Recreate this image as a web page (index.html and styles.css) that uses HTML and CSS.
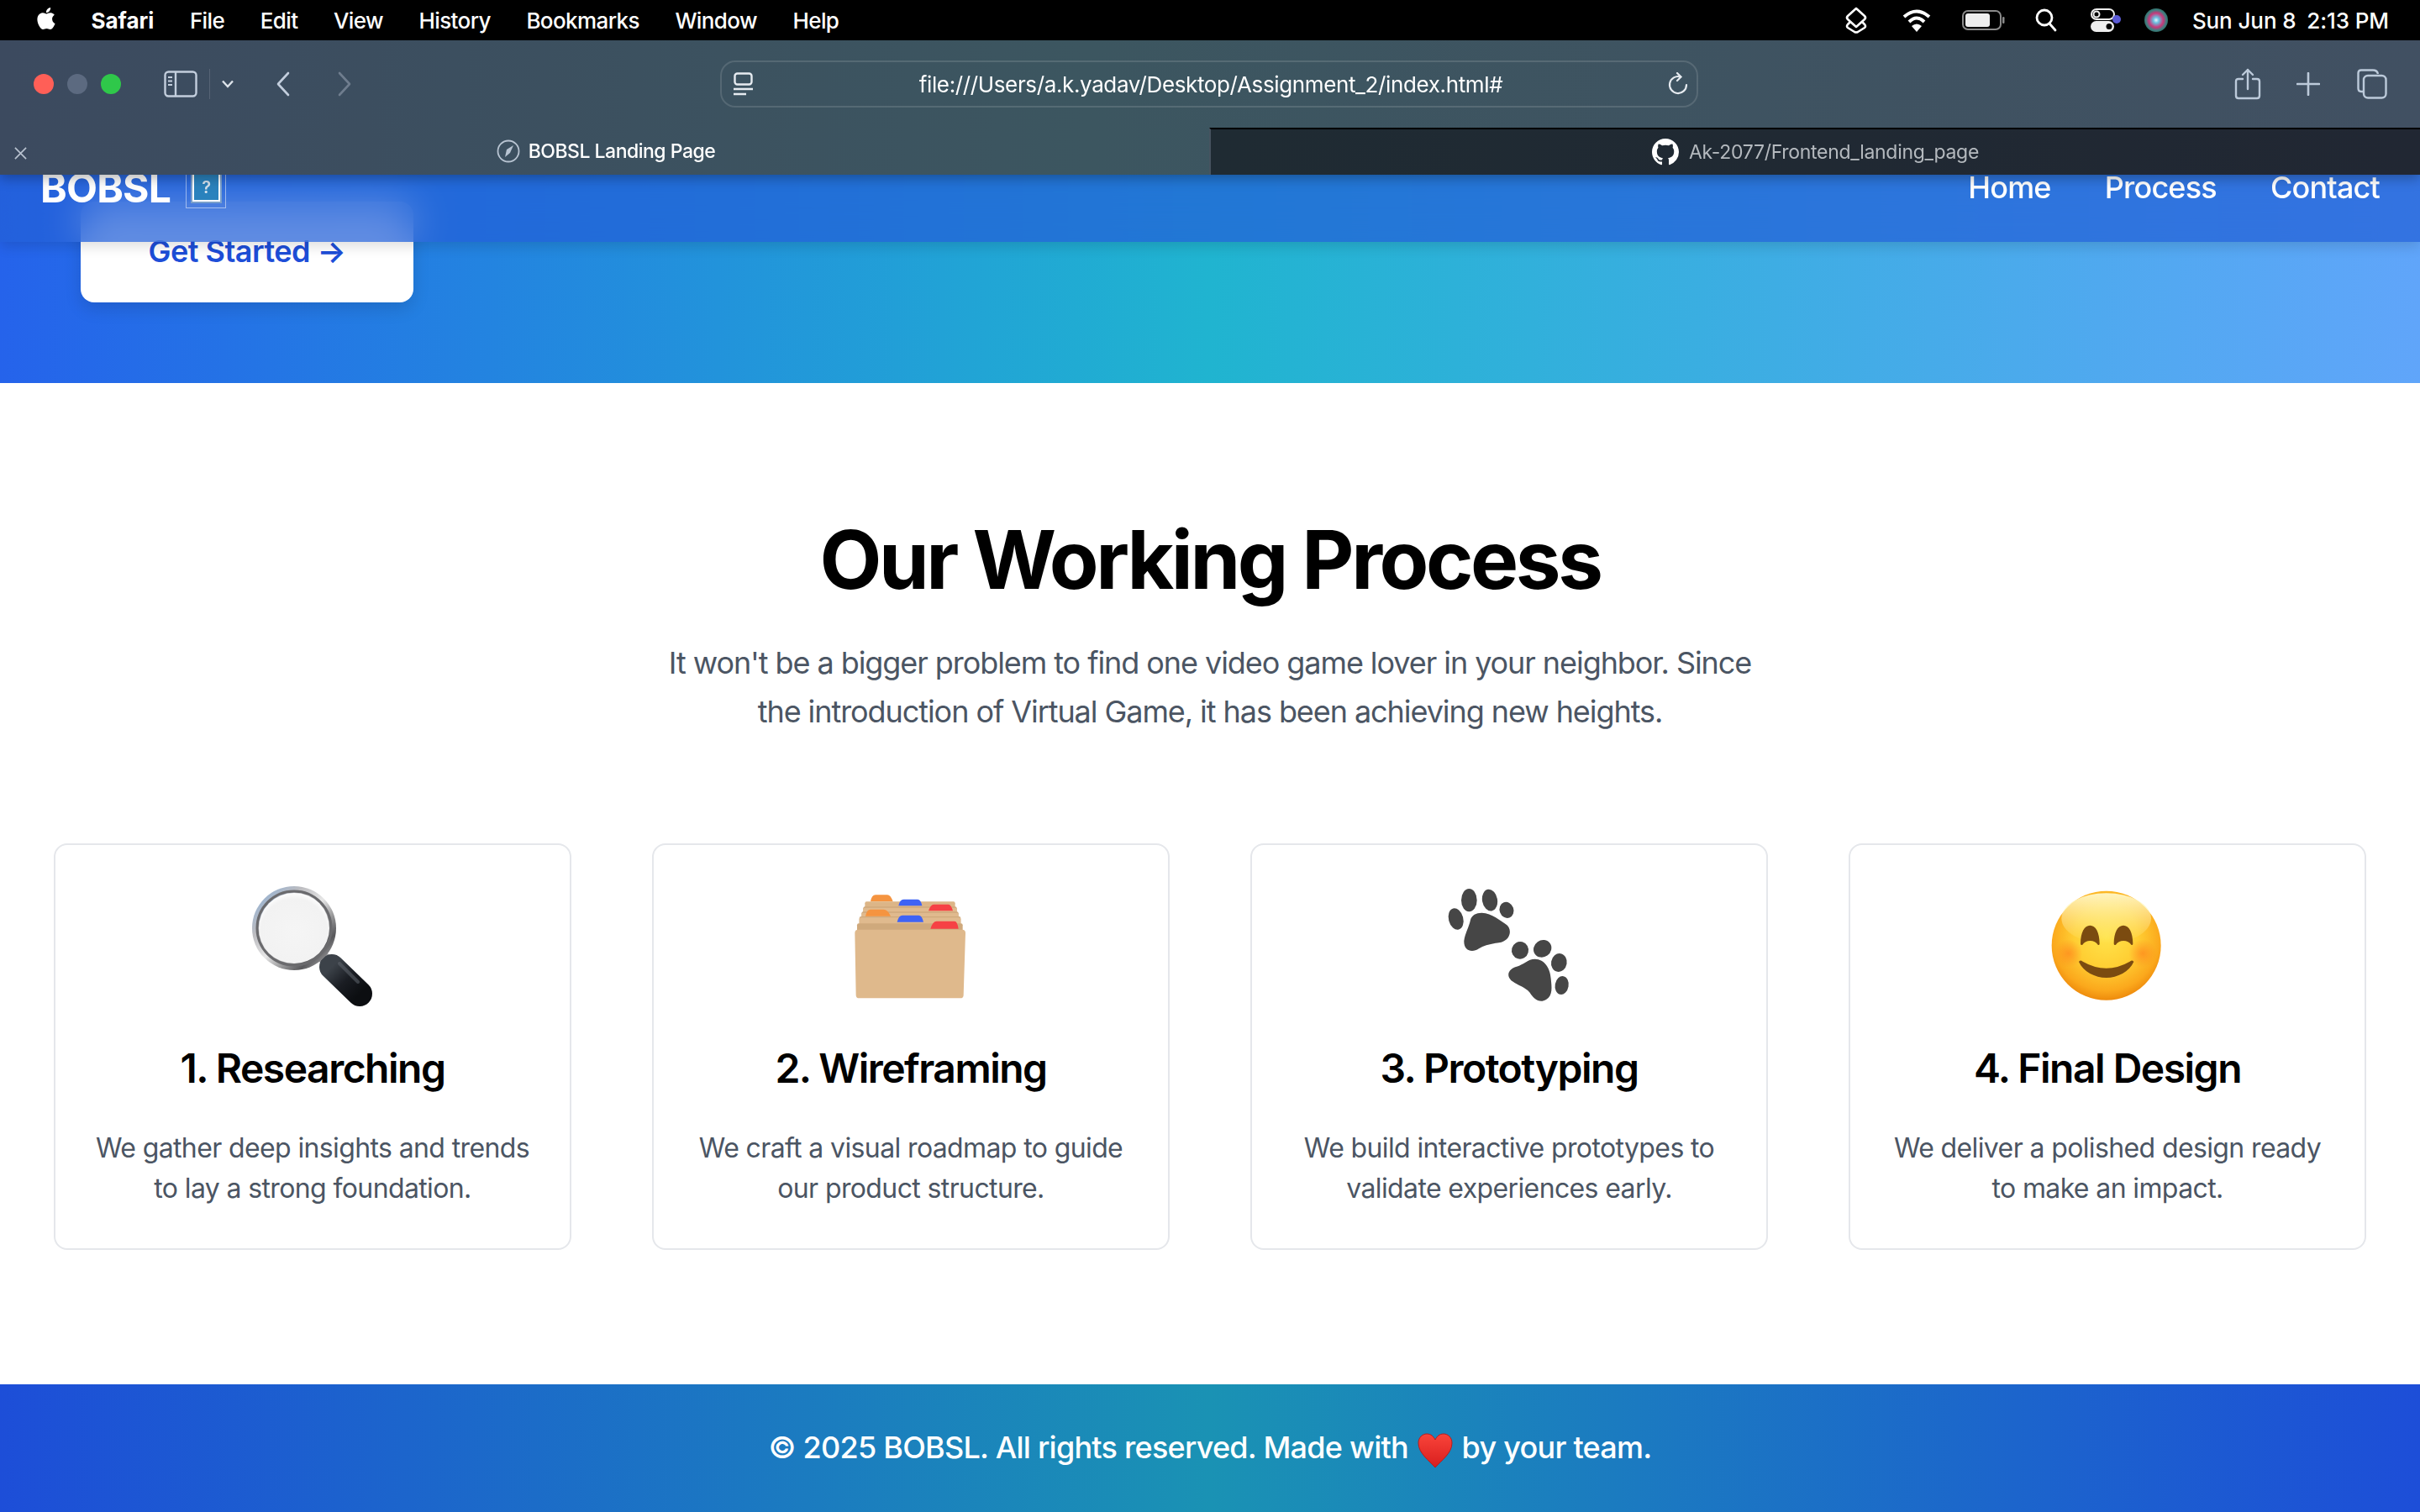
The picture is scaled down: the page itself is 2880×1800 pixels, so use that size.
FILE: index.html
```html
<!DOCTYPE html>
<html lang="en">
<head>
<meta charset="utf-8">
<title>BOBSL Landing Page</title>
<link rel="stylesheet" href="styles.css">
</head>
<body>
<div class="menubar">
  <div class="menu-left">
    <svg class="apple" viewBox="0 0 24 24"><path fill="#fff" d="M12.152 6.896c-.948 0-2.415-1.078-3.96-1.04-2.04.027-3.91 1.183-4.961 3.014-2.117 3.675-.546 9.103 1.519 12.09 1.013 1.454 2.208 3.09 3.792 3.039 1.52-.065 2.09-.987 3.935-.987 1.831 0 2.35.987 3.96.948 1.637-.026 2.676-1.48 3.676-2.948 1.156-1.688 1.636-3.325 1.662-3.415-.039-.013-3.182-1.221-3.22-4.857-.026-3.04 2.48-4.494 2.597-4.559-1.429-2.09-3.623-2.324-4.39-2.376-2-.156-3.675 1.09-4.61 1.09zM15.53 3.83c.843-1.012 1.4-2.427 1.245-3.83-1.207.052-2.662.805-3.532 1.818-.78.896-1.454 2.338-1.273 3.714 1.338.104 2.715-.688 3.559-1.701"/></svg>
    <b class="menu-app">Safari</b><span>File</span><span>Edit</span><span>View</span><span>History</span><span>Bookmarks</span><span>Window</span><span>Help</span>
  </div>
  <div class="menu-right">
    <svg class="st-layers" viewBox="0 0 28 32" fill="none" stroke="#fff" stroke-width="2.6" stroke-linejoin="round"><path d="M14 2 L24 11 Q26 13 24 15 L14 24 L4 15 Q2 13 4 11Z"/><path d="M7 18 L4 21 Q2 23.500 4 25 L12 30 Q14 31 16 30 L24 25 Q26 23.500 24 21 L21 18"/></svg>
    <svg class="st-wifi" viewBox="0 0 34 30" fill="none" stroke="#fff" stroke-width="4"><path d="M2 11 Q17 -2 32 11"/><path d="M8 17 Q17 8 26 17"/><path fill="#fff" stroke="none" d="M17 29 L11 22 Q17 17 23 22Z"/></svg>
    <svg class="st-batt" viewBox="0 0 52 24"><rect x="1" y="1" width="45" height="22" rx="6" fill="none" stroke="#8a8a8a" stroke-width="2"/><rect x="4" y="4" width="29" height="16" rx="3" fill="#eee"/><rect x="48" y="8" width="2.500" height="8" rx="1.200" fill="#8a8a8a"/></svg>
    <svg class="st-search" viewBox="0 0 26 28" fill="none" stroke="#fff" stroke-width="2.800" stroke-linecap="round"><circle cx="11" cy="11" r="9"/><path d="M17 18 L24 26"/></svg>
    <svg class="st-ctrl" viewBox="0 0 36 28"><rect x="1" y="1" width="27" height="12" rx="6" fill="none" stroke="#eee" stroke-width="2"/><circle cx="7" cy="7" r="3.500" fill="none" stroke="#eee" stroke-width="2"/><rect x="0" y="15" width="28" height="13" rx="6.500" fill="#eee"/><circle cx="22" cy="21.500" r="3.500" fill="#000"/><circle cx="31" cy="13" r="5" fill="#5b5bd6"/></svg>
    <svg class="st-siri" viewBox="0 0 28 28"><defs><radialGradient id="siri" cx=".5" cy=".5" r=".55"><stop offset="0" stop-color="#e8f4ff"/><stop offset=".22" stop-color="#6ac0e0"/><stop offset=".55" stop-color="#c8387a"/><stop offset=".8" stop-color="#3a8080"/><stop offset="1" stop-color="#2f5c50"/></radialGradient></defs><circle cx="14" cy="14" r="14" fill="url(#siri)"/></svg>
    <span class="clock">Sun Jun 8 <i class="clock-gap"></i>2:13 PM</span>
  </div>
</div>

<header class="chrome">
  <div class="toolbar">
    <div class="lights"><i class="light red"></i><i class="light grey"></i><i class="light green"></i></div>
    <svg class="ic-side" viewBox="0 0 40 32" fill="none" stroke="#c3cedd" stroke-width="2.400"><rect x="1.500" y="1.500" width="37" height="29" rx="4"/><path d="M14 2 V30"/><path d="M5 8 H10 M5 12.500 H10 M5 17 H10" stroke-width="2"/></svg>
    <i class="tb-sep"></i>
    <svg class="ic-chev" viewBox="0 0 16 10" fill="none" stroke="#dde3ea" stroke-width="2.400"><path d="M2 1.500 L8 8 L14 1.500"/></svg>
    <svg class="ic-back" viewBox="0 0 18 30" fill="none" stroke="#c3cedd" stroke-width="2.600" stroke-linecap="round" stroke-linejoin="round"><path d="M15 2 L3 15 L15 28"/></svg>
    <svg class="ic-fwd" viewBox="0 0 18 30" fill="none" stroke="#6f7d8e" stroke-width="2.600" stroke-linecap="round" stroke-linejoin="round"><path d="M3 2 L15 15 L3 28"/></svg>
    <div class="addr">
      <svg class="ic-page" viewBox="0 0 24 28" fill="none" stroke="#e6ebf0" stroke-width="2.400"><rect x="1.500" y="1.500" width="20" height="13" rx="3"/><path d="M0 20 H23 M0 26 H15"/></svg>
      <span class="url">file:///Users/a.k.yadav/Desktop/Assignment_2/index.html#</span>
      <svg class="ic-reload" viewBox="0 0 24 28" fill="none" stroke="#e6ebf0" stroke-width="2.200" stroke-linecap="round"><path d="M15 5.500 A10 10 0 1 0 22 15"/><path d="M11 1 L15.500 5.500 L11 10"/></svg>
    </div>
    <div class="tb-right">
      <svg class="ic-share" viewBox="0 0 32 38" fill="none" stroke="#bccada" stroke-width="2.400" stroke-linecap="round" stroke-linejoin="round"><path d="M10 13 H5 Q2 13 2 16 V33 Q2 36 5 36 H27 Q30 36 30 33 V16 Q30 13 27 13 H22"/><path d="M16 25 V2 M10 8 L16 2 L22 8"/></svg>
      <svg class="ic-plus" viewBox="0 0 28 28" fill="none" stroke="#bccada" stroke-width="2.600" stroke-linecap="round"><path d="M14 1 V27 M1 14 H27"/></svg>
      <svg class="ic-tabs" viewBox="0 0 36 36" fill="none" stroke="#bccada" stroke-width="2.400"><path d="M7 27 H5 Q1.500 27 1.500 23 V5 Q1.500 1.500 5 1.500 H19 Q24 1.500 25 6"/><rect x="8" y="8" width="26.500" height="26.500" rx="5"/></svg>
    </div>
  </div>
  <div class="tabs">
    <div class="tab tab-active">
      <svg class="tab-close" viewBox="0 0 16 16" fill="none" stroke="#b8c2cf" stroke-width="1.800"><path d="M1 1 L15 15 M15 1 L1 15"/></svg>
      <svg class="ic-compass" viewBox="0 0 28 28" fill="none" stroke="#b8c4d2" stroke-width="1.800"><circle cx="14" cy="14" r="12.500"/><path fill="#b8c4d2" stroke="none" d="M20 7 L16 16 L10 21 L12 12Z"/></svg>
      <span>BOBSL Landing Page</span>
    </div>
    <div class="tab tab-idle">
      <svg class="ic-gh" viewBox="0 0 16 16"><path fill="#fff" d="M8 0C3.58 0 0 3.58 0 8c0 3.54 2.29 6.53 5.47 7.59.4.07.55-.17.55-.38 0-.19-.01-.82-.01-1.49-2.01.37-2.53-.49-2.69-.94-.09-.23-.48-.94-.82-1.13-.28-.15-.68-.52-.01-.53.63-.01 1.08.58 1.23.82.72 1.21 1.87.87 2.33.66.07-.52.28-.87.51-1.07-1.78-.2-3.64-.89-3.64-3.95 0-.87.31-1.59.82-2.15-.08-.2-.36-1.02.08-2.12 0 0 .67-.21 2.2.82.64-.18 1.32-.27 2-.27.68 0 1.36.09 2 .27 1.53-1.04 2.2-.82 2.2-.82.44 1.1.16 1.92.08 2.12.51.56.82 1.27.82 2.15 0 3.07-1.87 3.75-3.65 3.95.29.25.54.73.54 1.48 0 1.07-.01 1.93-.01 2.2 0 .21.15.46.55.38A8.013 8.013 0 0016 8c0-4.42-3.58-8-8-8z"/></svg>
      <span>Ak-2077/Frontend_landing_page</span>
    </div>
  </div>
</header>

<main class="viewport">
  <nav class="nav">
    <div class="brand">
      <span class="brand-name">BOBSL</span>
      <span class="broken"><span class="broken-ic"><span class="broken-q">?</span></span></span>
    </div>
    <div class="nav-links"><a>Home</a><a>Process</a><a>Contact</a></div>
  </nav>

  <section class="hero"><a class="cta">Get Started →</a></section>

  <section class="process">
    <h2 class="process-title">Our Working Process</h2>
    <p class="process-sub">It won't be a bigger problem to find one video game lover in your neighbor. Since the introduction of Virtual Game, it has been achieving new heights.</p>
    <div class="cards">
      <article class="card">
        <svg class="emoji" viewBox="0 0 160 160">
          <defs>
            <linearGradient id="ring" x1="0" y1="0" x2="1" y2="1"><stop offset="0" stop-color="#86aedb"/><stop offset=".3" stop-color="#bcbcc0"/><stop offset=".5" stop-color="#e6e6e6"/><stop offset=".78" stop-color="#58585b"/><stop offset="1" stop-color="#d8d8d8"/></linearGradient>
            <linearGradient id="handle" x1="0" y1="0" x2="1" y2="1"><stop offset="0" stop-color="#3c4249"/><stop offset=".5" stop-color="#1a1d23"/><stop offset="1" stop-color="#0c0e11"/></linearGradient>
            <radialGradient id="glass" cx=".5" cy=".55" r=".55"><stop offset="0" stop-color="#f5f5f5"/><stop offset=".85" stop-color="#f2f2f2"/><stop offset="1" stop-color="#fdfdfd"/></radialGradient>
          </defs>
          <path d="M84 86 L100 102" stroke="#a8a8aa" stroke-width="14"/>
          <path d="M103 106 L136 138" stroke="url(#handle)" stroke-width="30" stroke-linecap="round"/>
          <path d="M112 102 L134 124" stroke="#60666e" stroke-width="4" stroke-linecap="round" opacity=".55"/>
          <circle cx="58" cy="60" r="50" fill="url(#ring)"/>
          <circle cx="58" cy="60" r="44" fill="none" stroke="#6a6a6d" stroke-width="3"/>
          <circle cx="58" cy="60" r="42" fill="url(#glass)"/>
        </svg>
        <h3 class="card-title">1. Researching</h3>
        <p class="card-text">We gather deep insights and trends to lay a strong foundation.</p>
      </article>
      <article class="card">
        <svg class="emoji" viewBox="0 0 160 160">
          <g transform="translate(-24,-5) scale(.33333)">
            <path fill="#f59440" d="M168 100 Q172 76 186 76 H228 Q240 76 248 100Z"/>
            <rect x="148" y="100" width="322" height="30" rx="6" fill="#dcb587"/>
            <path fill="#3f63f5" d="M268 115 Q272 92 286 92 H336 Q348 92 352 115Z"/>
            <rect x="142" y="118" width="334" height="30" rx="6" fill="#cfa97c"/>
            <rect x="142" y="122" width="334" height="28" rx="6" fill="#e0ba8e"/>
            <path fill="#f64145" d="M375 133 Q382 110 394 110 H446 Q456 110 462 133Z"/>
            <rect x="136" y="136" width="346" height="30" rx="6" fill="#cfa97c"/>
            <rect x="136" y="140" width="346" height="28" rx="6" fill="#e0ba8e"/>
            <path fill="#f59440" d="M150 152 Q154 128 168 128 H214 Q230 128 240 152Z"/>
            <rect x="128" y="153" width="362" height="30" rx="6" fill="#cfa97c"/>
            <rect x="128" y="157" width="362" height="28" rx="6" fill="#e0ba8e"/>
            <path fill="#3f63f5" d="M263 173 Q268 149 282 149 H340 Q352 149 357 173Z"/>
            <rect x="120" y="178" width="377" height="30" rx="6" fill="#cfa97c"/>
            <path fill="#f64145" d="M382 197 Q390 170 404 170 H468 Q478 170 482 197Z"/>
            <path fill="#dfb98c" d="M112 212 Q112 200 124 200 H495 Q507 200 507 212 L500 434 Q500 445 488 445 H128 Q116 445 116 434Z"/>
          </g>
        </svg>
        <h3 class="card-title">2. Wireframing</h3>
        <p class="card-text">We craft a visual roadmap to guide our product structure.</p>
      </article>
      <article class="card">
        <svg class="emoji" viewBox="0 0 160 160">
          <g transform="translate(-16,-5) scale(.33333)" fill="#464646">
            <ellipse cx="145" cy="95" rx="28" ry="41"/>
            <ellipse cx="219" cy="95" rx="27" ry="39" transform="rotate(-10 219 95)"/>
            <ellipse cx="279" cy="130" rx="25" ry="29" transform="rotate(-20 279 130)"/>
            <ellipse cx="98" cy="162" rx="26" ry="39" transform="rotate(-15 98 162)"/>
            <path d="M190 140 C225 140 250 165 275 180 C300 195 295 235 260 245 C225 250 200 255 180 268 C155 285 125 275 127 240 C130 215 145 190 150 165 C155 148 170 140 190 140Z"/>
            <ellipse cx="327" cy="274" rx="30" ry="31" transform="rotate(15 327 274)"/>
            <ellipse cx="407" cy="268" rx="33" ry="30" transform="rotate(-35 407 268)"/>
            <ellipse cx="466" cy="318" rx="28" ry="33" transform="rotate(10 466 318)"/>
            <ellipse cx="476" cy="399" rx="24" ry="33" transform="rotate(10 476 399)"/>
            <path d="M380 305 C415 305 435 340 437 375 C440 405 445 435 420 450 C395 465 375 445 362 425 C345 405 320 400 300 385 C275 365 285 340 315 332 C340 325 355 305 380 305Z"/>
          </g>
        </svg>
        <h3 class="card-title">3. Prototyping</h3>
        <p class="card-text">We build interactive prototypes to validate experiences early.</p>
      </article>
      <article class="card">
        <svg class="emoji" viewBox="0 0 160 160">
          <defs>
            <radialGradient id="face" cx=".5" cy=".42" r=".58"><stop offset="0" stop-color="#ffe34a"/><stop offset=".5" stop-color="#ffce33"/><stop offset=".85" stop-color="#fba81c"/><stop offset="1" stop-color="#ee8b0c"/></radialGradient>
            <linearGradient id="shine" x1="0" y1="0" x2="0" y2="1"><stop offset="0" stop-color="#fff8c8" stop-opacity=".95"/><stop offset="1" stop-color="#fff6a8" stop-opacity="0"/></linearGradient>
            <radialGradient id="blush"><stop offset="0" stop-color="#ff8a1e" stop-opacity=".75"/><stop offset="1" stop-color="#ff8a1e" stop-opacity="0"/></radialGradient>
          </defs>
          <g transform="translate(-18,-5) scale(.33333)">
            <circle cx="290" cy="257" r="195" fill="url(#face)"/>
            <ellipse cx="290" cy="160" rx="160" ry="90" fill="url(#shine)"/>
            <circle cx="155" cy="285" r="50" fill="url(#blush)"/>
            <circle cx="420" cy="285" r="50" fill="url(#blush)"/>
            <path fill="#7b4b10" d="M198 250 C198 210 212 185 232 185 C252 185 266 210 266 250 Q266 258 260 254 C250 235 215 235 205 254 Q198 258 198 250Z"/>
            <path fill="#7b4b10" d="M317 250 C317 210 331 185 351 185 C371 185 385 210 385 250 Q385 258 379 254 C369 235 334 235 324 254 Q317 258 317 250Z"/>
            <path fill="#7b4b10" d="M192 315 Q196 306 206 314 Q290 362 374 314 Q384 306 388 315 C372 350 330 372 290 372 C250 372 208 350 192 315Z"/>
          </g>
        </svg>
        <h3 class="card-title">4. Final Design</h3>
        <p class="card-text">We deliver a polished design ready to make an impact.</p>
      </article>
    </div>
  </section>

  <footer class="footer">© 2025 BOBSL. All rights reserved. Made with
    <svg class="heart" viewBox="0 0 42 42"><defs><linearGradient id="hg" x1="0" y1="0" x2="0" y2="1"><stop offset="0" stop-color="#f9443a"/><stop offset="1" stop-color="#d81e1e"/></linearGradient></defs><path fill="url(#hg)" stroke="#b81c1c" stroke-width="1" d="M21 41 C14 33 1 24 1 12 C1 5 6 1 11 1 C16 1 19 4 21 8 C23 4 26 1 31 1 C36 1 41 5 41 12 C41 24 28 33 21 41Z"/></svg>
    by your team.</footer>
</main>
</body>
</html>
```
FILE: styles.css
```css
* { box-sizing: border-box; }
html, body { margin: 0; padding: 0; }
body {
  width: 2880px;
  height: 1800px;
  overflow: hidden;
  font-family: Inter, "Liberation Sans", sans-serif;
  background: #fff;
  color: #000;
}
svg { display: block; flex: none; }

/* macOS menu bar */
.menubar {
  height: 48px;
  background: #000;
  color: #fff;
  display: flex;
  justify-content: space-between;
  align-items: center;
  font-size: 26px;
  font-weight: 500;
  padding: 0 37px 0 42px;
}
.menu-left { display: flex; align-items: center; gap: 42.5px; letter-spacing: -.6px; }
.apple { width: 26px; height: 30px; margin: -4px -2px 0 0; }
.menu-app { font-weight: 700; letter-spacing: 0; }
.menu-right { display: flex; align-items: center; }
.st-layers { width: 28px; height: 32px; }
.st-wifi { width: 34px; height: 30px; margin-left: 41px; }
.st-batt { width: 52px; height: 24px; margin-left: 37px; }
.st-search { width: 26px; height: 28px; margin-left: 35px; }
.st-ctrl { width: 36px; height: 28px; margin-left: 40px; }
.st-siri { width: 28px; height: 28px; margin-left: 28px; }
.clock { margin-left: 29px; white-space: nowrap; letter-spacing: -.1px; }
.clock-gap { display: inline-block; width: 6px; }

/* Safari chrome */
.chrome {
  position: relative;
  z-index: 5;
  height: 160px;
  background: linear-gradient(90deg, #3c4a5f 0%, #3c5660 45%, #415062 100%);
  box-shadow: 0 4px 14px rgba(0, 0, 0, .3);
}
.toolbar {
  height: 104px;
  display: flex;
  align-items: center;
  padding: 0 39px 0 40px;
}
.lights { display: flex; gap: 16px; }
.light { width: 24px; height: 24px; border-radius: 50%; display: block; }
.red { background: #ff5f57; }
.grey { background: #5c6a80; }
.green { background: #2fc84a; }
.ic-side { width: 40px; height: 32px; margin-left: 51px; }
.tb-sep { width: 1px; height: 36px; background: #566476; margin-left: 14px; }
.ic-chev { width: 16px; height: 10px; margin-left: 13px; }
.ic-back { width: 18px; height: 30px; margin-left: 49px; }
.ic-fwd { width: 18px; height: 30px; margin-left: 55px; }
.addr {
  width: 1164px;
  height: 56px;
  margin-left: 438px;
  border: 2px solid rgba(255, 255, 255, .13);
  border-radius: 18px;
  display: flex;
  align-items: center;
  padding: 0 10px 0 14px;
  color: #fff;
  font-size: 26px;
  letter-spacing: -.37px;
}
.ic-page { width: 24px; height: 28px; }
.url { flex: 1; text-align: center; white-space: nowrap; }
.ic-reload { width: 24px; height: 28px; }
.tb-right { display: flex; align-items: center; margin-left: auto; }
.ic-share { width: 32px; height: 38px; }
.ic-plus { width: 28px; height: 28px; margin-left: 42px; }
.ic-tabs { width: 36px; height: 36px; margin-left: 44px; }

.tabs {
  height: 56px;
  display: grid;
  grid-template-columns: 1439px 1fr;
  font-size: 23px;
}
.tab { display: flex; align-items: center; justify-content: center; position: relative; }
.tab-active { color: #fff; font-weight: 500; letter-spacing: -.5px; padding-left: 3px; }
.tab-idle {
  background: linear-gradient(90deg, #1f2b33, #212733);
  border-top: 2px solid #000;
  border-left: 2px solid #46535f;
  color: #b4b9be;
  letter-spacing: -.3px;
}
.tab-close { position: absolute; left: 17px; top: 23px; width: 15px; height: 15px; }
.ic-compass { width: 28px; height: 28px; margin-right: 10px; }
.ic-gh { width: 32px; height: 32px; margin-right: 12px; }

/* Page */
.viewport { position: relative; height: 1592px; overflow: hidden; }
.nav {
  position: absolute;
  top: 0;
  left: 0;
  right: 0;
  height: 80px;
  padding: 0 48px;
  display: flex;
  justify-content: space-between;
  color: #fff;
  background: rgba(34, 96, 215, .72);
  backdrop-filter: blur(24px);
  box-shadow: 0 6px 14px rgba(0, 0, 0, .12);
  z-index: 3;
}
.brand { display: flex; align-items: flex-start; }
.brand-name { font-size: 48px; line-height: 48px; font-weight: 700; letter-spacing: -.8px; margin-top: -8px; }
.broken {
  width: 48px;
  height: 40px;
  margin-left: 18px;
  border: 1px solid rgba(255, 255, 255, .5);
  border-top: 0;
  padding: 0 7px 7px;
}
.broken-ic {
  display: flex;
  align-items: center;
  justify-content: center;
  width: 33px;
  height: 32px;
  background: #2a82bd;
  border: solid #fff;
  border-width: 0 2px 2px;
  outline: 2px solid #7aa0cb;
  color: #d5e2ee;
  font-size: 20px;
  font-weight: 600;
  line-height: 1;
}
.broken-q { display: block; }
.nav-links { display: flex; gap: 64px; margin-top: -3px; font-size: 36px; line-height: 36px; font-weight: 500; letter-spacing: -.8px; }

.hero {
  height: 248px;
  padding: 32px 96px 0;
  background: linear-gradient(90deg, #2563eb 0%, #20b4d0 50%, #60a5fa 100%);
}
.cta {
  display: block;
  width: 396px;
  height: 120px;
  padding-top: 32px;
  text-align: center;
  background: #fff;
  color: #1d4ed8;
  font-size: 36px;
  line-height: 54px;
  font-weight: 600;
  letter-spacing: -.5px;
  border-radius: 16px;
  box-shadow: 0 8px 20px rgba(0, 0, 0, .12);
}

.process { height: 1192px; padding: 153px 64px 0; text-align: center; }
.process-title { margin: 0; font-size: 96px; line-height: 115px; font-weight: 700; letter-spacing: -3.4px; color: #000; }
.process-sub {
  width: 1344px;
  margin: 37px auto 0;
  height: 243px;
  color: #4b5563;
  font-size: 36px;
  line-height: 57.5px;
  letter-spacing: -1.07px;
}
.cards { display: grid; grid-template-columns: repeat(4, 616px); gap: 96px; }
.card {
  height: 484px;
  padding: 39px 42px 0;
  border: 2px solid #e5e7eb;
  border-radius: 16px;
}
.emoji { width: 160px; height: 160px; margin: 0 auto; }
.card-title { margin: 38px 0 0; font-size: 48px; line-height: 58px; font-weight: 600; letter-spacing: -1.5px; }
.card-text { margin: 42px 0 0; color: #4b5563; font-size: 32px; line-height: 48px; letter-spacing: -.62px; }

.footer {
  height: 152px;
  padding-top: 48px;
  text-align: center;
  color: #fff;
  font-size: 36px;
  line-height: 54px;
  font-weight: 500;
  letter-spacing: -.75px;
  background: linear-gradient(90deg, #1d4ed8 0%, #1a92b4 50%, #1d4ed8 100%);
}
.heart { display: inline-block; width: 42px; height: 42px; margin: 0 2px; vertical-align: -12px; }
```
